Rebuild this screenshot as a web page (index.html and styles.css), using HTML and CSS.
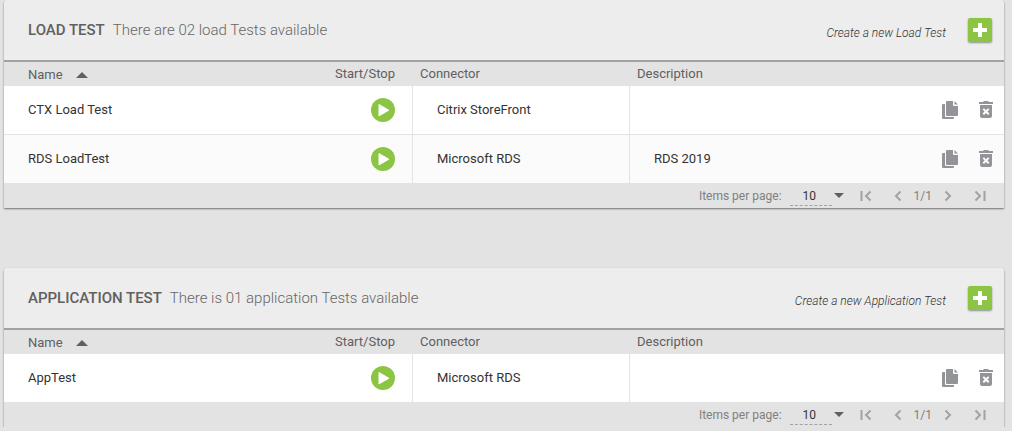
FILE: index.html
```html
<!DOCTYPE html>
<html lang="en">
<head>
  <meta charset="UTF-8">
  <meta name="viewport" content="width=device-width, initial-scale=1.0">
  <title>Tests</title>
  <link rel="stylesheet" href="styles.css">
</head>
<body>
  <!-- shared icons -->
  <svg class="sprite" aria-hidden="true">
    <symbol id="plus" viewBox="0 0 24 24"><path d="M10.500 5h3a.5.5 0 0 1 .5.5V10h4.500a.5.5 0 0 1 .5.5v3a.5.5 0 0 1-.5.5H14v4.500a.5.5 0 0 1-.5.5h-3a.5.5 0 0 1-.5-.5V14H5.500a.5.5 0 0 1-.5-.5v-3a.5.5 0 0 1 .5-.5H10V5.500a.5.5 0 0 1 .5-.5z"/></symbol>
    <symbol id="play" viewBox="0 0 24 24"><circle cx="12" cy="12" r="12" fill="#8cc443"/><path d="M8 6.500v11.400L17.800 12.200z" fill="#fff" stroke="#fff" stroke-width="1" stroke-linejoin="round"/></symbol>
    <symbol id="copy" viewBox="0 0 16 18"><path d="M5 0h6v4a1 1 0 0 0 1 1h4v9a1 1 0 0 1-1 1H5a1 1 0 0 1-1-1V1a1 1 0 0 1 1-1zM12.500 0L16 3.500h-3.500zM0 4a1 1 0 0 1 1-1h2v12a1 1 0 0 0 1 1h8v1a1 1 0 0 1-1 1H1a1 1 0 0 1-1-1z"/></symbol>
    <symbol id="trash" viewBox="0 0 14 18"><path d="M4 1l1-1h4l1 1h4v2H0V1z"/><path fill-rule="evenodd" d="M1 4h12v11a2 2 0 0 1-2 2H3a2 2 0 0 1-2-2zM3.600 8.600L5.600 10.600l-2 2 1.400 1.400 2-2 2 2 1.400-1.400-2-2 2-2L9 7.200l-2 2-2-2z"/></symbol>
    <symbol id="first" viewBox="0 0 12 12"><path d="M1.500 1v10M10.500 1.500L6 6l4.500 4.500"/></symbol>
    <symbol id="prev" viewBox="0 0 12 12"><path d="M8.500 1.500L4 6l4.500 4.500"/></symbol>
    <symbol id="next" viewBox="0 0 12 12"><path d="M3.500 1.500L8 6l-4.500 4.500"/></symbol>
    <symbol id="last" viewBox="0 0 12 12"><path d="M1.500 1.500L6 6l-4.500 4.500M10.500 1v10"/></symbol>
  </svg>

  <section class="panel">
    <header class="panel-header">
      <h2>Load Test</h2>
      <p class="summary">There are 02 load Tests available</p>
      <label class="create-label" for="addLoad">Create a new Load Test</label>
      <button class="add" id="addLoad"><svg><use href="#plus"/></svg></button>
    </header>
    <table>
      <thead>
        <tr>
          <th class="name">Name <span class="sort"></span></th>
          <th class="start">Start/Stop</th>
          <th class="connector">Connector</th>
          <th class="description">Description</th>
          <th class="actions"></th>
        </tr>
      </thead>
      <tbody>
        <tr>
          <td>CTX Load Test</td>
          <td class="start"><button class="play" aria-label="Start"><svg><use href="#play"/></svg></button></td>
          <td class="line">Citrix StoreFront</td>
          <td class="line"></td>
          <td class="actions">
            <div class="icons">
              <button class="copy" aria-label="Copy"><svg><use href="#copy"/></svg></button>
              <button class="trash" aria-label="Delete"><svg><use href="#trash"/></svg></button>
            </div>
          </td>
        </tr>
        <tr>
          <td>RDS LoadTest</td>
          <td class="start"><button class="play" aria-label="Start"><svg><use href="#play"/></svg></button></td>
          <td class="line">Microsoft RDS</td>
          <td class="line">RDS 2019</td>
          <td class="actions">
            <div class="icons">
              <button class="copy" aria-label="Copy"><svg><use href="#copy"/></svg></button>
              <button class="trash" aria-label="Delete"><svg><use href="#trash"/></svg></button>
            </div>
          </td>
        </tr>
      </tbody>
    </table>
    <footer class="pager">
      <label for="loadSize">Items per page:</label>
      <select id="loadSize"><option>10</option><option>25</option></select>
      <span class="arrow"></span>
      <button class="first" aria-label="First page"><svg><use href="#first"/></svg></button>
      <button class="prev" aria-label="Previous page"><svg><use href="#prev"/></svg></button>
      <span class="page">1/1</span>
      <button class="next" aria-label="Next page"><svg><use href="#next"/></svg></button>
      <button class="last" aria-label="Last page"><svg><use href="#last"/></svg></button>
    </footer>
  </section>

  <section class="panel">
    <header class="panel-header">
      <h2>Application Test</h2>
      <p class="summary">There is 01 application Tests available</p>
      <label class="create-label" for="addApp">Create a new Application Test</label>
      <button class="add" id="addApp"><svg><use href="#plus"/></svg></button>
    </header>
    <table>
      <thead>
        <tr>
          <th class="name">Name <span class="sort"></span></th>
          <th class="start">Start/Stop</th>
          <th class="connector">Connector</th>
          <th class="description">Description</th>
          <th class="actions"></th>
        </tr>
      </thead>
      <tbody>
        <tr>
          <td>AppTest</td>
          <td class="start"><button class="play" aria-label="Start"><svg><use href="#play"/></svg></button></td>
          <td class="line">Microsoft RDS</td>
          <td class="line"></td>
          <td class="actions">
            <div class="icons">
              <button class="copy" aria-label="Copy"><svg><use href="#copy"/></svg></button>
              <button class="trash" aria-label="Delete"><svg><use href="#trash"/></svg></button>
            </div>
          </td>
        </tr>
      </tbody>
    </table>
    <footer class="pager">
      <label for="appSize">Items per page:</label>
      <select id="appSize"><option>10</option><option>25</option></select>
      <span class="arrow"></span>
      <button class="first" aria-label="First page"><svg><use href="#first"/></svg></button>
      <button class="prev" aria-label="Previous page"><svg><use href="#prev"/></svg></button>
      <span class="page">1/1</span>
      <button class="next" aria-label="Next page"><svg><use href="#next"/></svg></button>
      <button class="last" aria-label="Last page"><svg><use href="#last"/></svg></button>
    </footer>
  </section>
</body>
</html>
```
FILE: styles.css
```css
* {
  box-sizing: border-box;
}

body {
  margin: 0;
  padding: 0 8px 0 4px;
  background-color: #e3e3e3;
  font-family: Roboto, Arial, sans-serif;
  font-size: 13px;
  color: #333;
}

.sprite {
  display: none;
}

svg {
  display: block;
  width: 100%;
  height: 100%;
}

button {
  flex: none;
  padding: 0;
  border: none;
  background: none;
  cursor: pointer;
}

.panel {
  border-radius: 3px 3px 0 0;
  box-shadow: 0 1px 2px rgba(0, 0, 0, 0.5);
}

.panel + .panel {
  margin-top: 60px;
}

.panel-header {
  display: flex;
  align-items: center;
  height: 62px;
  padding: 0 12px 0 24px;
  background-color: #ededed;
  border-bottom: 2px solid #a2a2a2;
  border-radius: 3px 3px 0 0;
}

h2 {
  margin: 0 8px 0 0;
  font-size: 15px;
  font-weight: 500;
  text-transform: uppercase;
  color: #606060;
}

.summary {
  margin: 0;
  font-size: 15px;
  font-weight: 300;
  color: #666;
}

.create-label {
  margin-left: auto;
  padding-top: 5px;
  font-size: 12px;
  font-style: italic;
  font-weight: 300;
  color: #333;
}

.add {
  width: 24px;
  height: 24px;
  margin-left: 22px;
  border-radius: 2px;
  background-color: #8cc443;
  fill: #fff;
  box-shadow: 0 1px 2px rgba(0, 0, 0, 0.4);
}

table {
  width: 100%;
  table-layout: fixed;
  border-collapse: separate;
  border-spacing: 0;
}

th {
  height: 24px;
  padding: 0 7px 2px;
  background-color: #e3e3e3;
  font-weight: 400;
  text-align: left;
  color: #606060;
}

td {
  height: 48px;
  padding: 0 24px 2px;
  background-color: #fff;
}

tbody tr:nth-child(even) td {
  background-color: #fbfbfb;
}

tbody tr + tr td {
  height: 49px;
  border-top: 1px solid #e3e3e3;
}

.line {
  border-left: 1px solid #e3e3e3;
}

th.name {
  width: 30%;
  padding: 0 0 0 24px;
}

th.start {
  width: 10.8%;
  padding: 0 17px 2px 0;
  text-align: right;
}

th.connector {
  width: 21.7%;
  padding-left: 8px;
}

th.description {
  padding-left: 8px;
}

th.actions {
  width: 90px;
}

td.start {
  padding: 0 17px 0 0;
  text-align: right;
}

td.actions {
  padding: 0 11px 0 0;
}

.sort {
  display: inline-block;
  margin-left: 10px;
  border: 6px solid transparent;
  border-top: none;
  border-bottom-color: #606060;
  vertical-align: 1px;
}

.play {
  display: inline-block;
  width: 24px;
  height: 24px;
  vertical-align: middle;
}

.icons {
  display: flex;
  justify-content: flex-end;
  align-items: center;
  gap: 21px;
  fill: #929497;
}

.copy {
  width: 16px;
  height: 18px;
}

.trash {
  width: 14px;
  height: 18px;
}

.pager {
  display: flex;
  justify-content: flex-end;
  align-items: center;
  height: 25px;
  padding-right: 18px;
  font-size: 12px;
  color: #808080;
}

.pager select {
  width: 42px;
  height: 20px;
  margin-left: 8px;
  padding: 1px 0 0 13px;
  appearance: none;
  border: none;
  border-bottom: 1px dashed #a2a2a2;
  border-radius: 0;
  background: none;
  font-family: inherit;
  font-size: 12px;
  color: #333;
}

.arrow {
  margin: 0 16px 0 2px;
  border: 5px solid transparent;
  border-bottom: none;
  border-top-color: #606060;
}

.pager button {
  width: 12px;
  height: 12px;
  fill: none;
  stroke: #a2a2a2;
  stroke-width: 2;
}

.prev {
  margin-left: 20px;
}

.page {
  margin: 0 10px;
}

.last {
  margin-left: 20px;
}
```
